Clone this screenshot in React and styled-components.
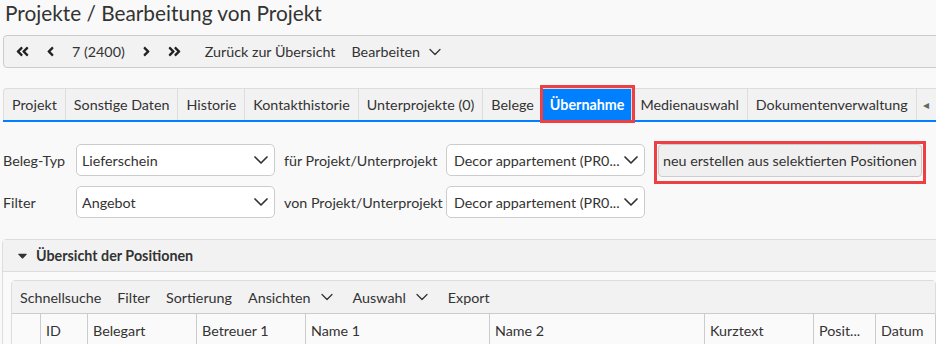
import React from "react";
import styled, { createGlobalStyle } from "styled-components";
import { FaAngleDoubleLeft, FaAngleLeft, FaAngleRight, FaAngleDoubleRight, FaCaretDown } from "react-icons/fa";
import { ChevronDown } from "lucide-react";

const tabs = [
  "Projekt",
  "Sonstige Daten",
  "Historie",
  "Kontakthistorie",
  "Unterprojekte (0)",
  "Belege",
  "Übernahme",
  "Medienauswahl",
  "Dokumentenverwaltung",
];

const columns = [
  { label: "", width: 29 },
  { label: "ID", width: 47 },
  { label: "Belegart", width: 109 },
  { label: "Betreuer 1", width: 109 },
  { label: "Name 1", width: 184 },
  { label: "Name 2", width: 215 },
  { label: "Kurztext", width: 109 },
  { label: "Posit...", width: 62 },
  { label: "Datum", width: 60 },
];

const GlobalStyle = createGlobalStyle`
  html, body {
    margin: 0;
    padding: 0;
    overflow: hidden;
    background: #f9f9f9;
  }
  body {
    font-family: Lato, "Noto Sans", sans-serif;
    font-size: 14.3px;
    color: #333;
  }
`;

function App() {
  return (
    <>
      <GlobalStyle />
      <Page>
        <Title>Projekte / Bearbeitung von Projekt</Title>
        <NavBar>
          <IconButton><FaAngleDoubleLeft size={15} /></IconButton>
          <IconButton><FaAngleLeft size={15} /></IconButton>
          <NavButton>7 (2400)</NavButton>
          <IconButton><FaAngleRight size={15} /></IconButton>
          <IconButton><FaAngleDoubleRight size={15} /></IconButton>
          <NavActions>
            <NavButton>Zurück zur Übersicht</NavButton>
            <NavButton>
              Bearbeiten
              <ChevronDown size={20} strokeWidth={1.5} />
            </NavButton>
          </NavActions>
        </NavBar>

        <TabBar>
          {tabs.map((t) => (
            <Tab key={t} $active={t === "Übernahme"}>
              {t}
            </Tab>
          ))}
          <Tab $stub>
            <StubIcon>◂</StubIcon>
          </Tab>
        </TabBar>

        <Form>
          <FormRow>
            <Label $w={72}>Beleg-Typ</Label>
            <Select>
              <span>Lieferschein</span>
              <ChevronDown size={24} strokeWidth={1.7} />
            </Select>
            <Label $w={161} $pad>für Projekt/Unterprojekt</Label>
            <Select $wide>
              <span>Decor appartement (PR0...</span>
              <ChevronDown size={24} strokeWidth={1.7} />
            </Select>
            <Highlight>
              <Button>neu erstellen aus selektierten Positionen</Button>
            </Highlight>
          </FormRow>
          <FormRow>
            <Label $w={72}>Filter</Label>
            <Select>
              <span>Angebot</span>
              <ChevronDown size={24} strokeWidth={1.7} />
            </Select>
            <Label $w={161} $pad>von Projekt/Unterprojekt</Label>
            <Select $wide>
              <span>Decor appartement (PR0...</span>
              <ChevronDown size={24} strokeWidth={1.7} />
            </Select>
          </FormRow>
        </Form>

        <Panel>
          <PanelHeader>
            <FaCaretDown size={15} />
            Übersicht der Positionen
          </PanelHeader>
          <PanelBody>
            <Grid>
              <GridToolbar>
                <ToolItem>Schnellsuche</ToolItem>
                <ToolItem>Filter</ToolItem>
                <ToolItem>Sortierung</ToolItem>
                <ToolItem>
                  Ansichten <ChevronDown size={20} strokeWidth={1.5} />
                </ToolItem>
                <ToolItem>
                  Auswahl <ChevronDown size={20} strokeWidth={1.5} />
                </ToolItem>
                <ToolItem>Export</ToolItem>
              </GridToolbar>
              <HeaderRow $cols={columns.map((c) => c.width + "px").join(" ")}>
                {columns.map((c, i) => (
                  <HeaderCell key={i}>{c.label}</HeaderCell>
                ))}
              </HeaderRow>
            </Grid>
          </PanelBody>
        </Panel>
      </Page>
    </>
  );
}

export default App;

const Page = styled.div`
  width: 942px;
  padding: 0 0 0 3px;
`;

const Title = styled.h1`
  margin: 0;
  padding: 1px 0 0 2px;
  height: 35px;
  box-sizing: border-box;
  font-size: 20.8px;
  font-weight: 400;
  line-height: 24px;
  color: #333;
`;

const NavBar = styled.div`
  display: flex;
  align-items: center;
  height: 31px;
  padding: 0 4px;
  border: 1px solid #ccc;
  border-radius: 4px;
  background: #f2f2f2;
`;

const IconButton = styled.div`
  display: flex;
  align-items: center;
  justify-content: center;
  width: 28px;
  height: 100%;
  svg {
    color: #222;
  }
`;

const NavActions = styled.div`
  display: flex;
  align-items: center;
  height: 100%;
  margin-left: 8px;
`;

const NavButton = styled.div`
  display: flex;
  align-items: center;
  gap: 5px;
  height: 100%;
  padding: 0 8px;
  color: #333;
  white-space: nowrap;
  svg {
    color: #333;
  }
`;

const TabBar = styled.div`
  display: flex;
  margin-top: 20px;
  border-bottom: 2px solid #0080ff;
  height: 32px;
`;

const Tab = styled.div`
  position: relative;
  display: flex;
  align-items: center;
  padding: 0 8px;
  height: 32px;
  box-sizing: border-box;
  border: 1px solid #ddd;
  border-left: none;
  border-bottom: none;
  background: ${(p) => (p.$active ? "#0080ff" : "#f2f2f2")};
  color: ${(p) => (p.$active ? "#fff" : "#333")};
  font-weight: ${(p) => (p.$active ? 700 : 400)};
  white-space: nowrap;
  &:first-child {
    border-left: 1px solid #ddd;
    border-top-left-radius: 4px;
  }
  ${(p) =>
    p.$active &&
    `
    padding: 0 7px;
    outline: 3px solid #ee3f42;
    z-index: 1;
  `}
  ${(p) => p.$stub && `padding: 0 6px; flex: 1;`}
`;

const StubIcon = styled.span`
  font-size: 12px;
  color: #666;
`;

const Form = styled.div`
  display: flex;
  flex-direction: column;
  gap: 10px;
  padding: 22px 0 21px;
`;

const FormRow = styled.div`
  display: flex;
  align-items: center;
  height: 32px;
`;

const Label = styled.div`
  width: ${(p) => p.$w}px;
  padding-left: ${(p) => (p.$pad ? "9px" : "0")};
  flex: none;
  white-space: nowrap;
`;

const Select = styled.div`
  display: flex;
  align-items: center;
  justify-content: space-between;
  width: 199px;
  height: 32px;
  box-sizing: border-box;
  padding: 0 1px 0 ${(p) => (p.$wide ? "7px" : "5px")};
  margin-left: 1px;
  border: 1px solid #ccc;
  border-radius: 5px;
  background: #fff;
  span {
    white-space: nowrap;
    overflow: hidden;
  }
  svg {
    flex: none;
    color: #333;
    margin-left: ${(p) => (p.$wide ? "-6px" : "0")};
  }
`;

const Highlight = styled.div`
  align-self: flex-start;
  margin: -3px 0 0 9px;
  border: 3px solid #ee3f42;
`;

const Button = styled.div`
  display: flex;
  align-items: center;
  height: 33px;
  box-sizing: border-box;
  padding: 0 4px 0 4px;
  margin: 0 1px 4px 1px;
  border: 1px solid #ccc;
  border-radius: 4px;
  background: #f0f0f0;
  white-space: nowrap;
`;

const Panel = styled.div`
  margin-left: -1px;
  border: 1px solid #ddd;
  border-radius: 4px 4px 0 0;
  background: #fafafa;
`;

const PanelHeader = styled.div`
  display: flex;
  align-items: center;
  gap: 6px;
  height: 31px;
  padding-left: 12px;
  background: #f2f2f2;
  border-bottom: 1px solid #ddd;
  font-weight: 700;
  color: #333;
`;

const PanelBody = styled.div`
  padding: 8px 8px 0 8px;
`;

const Grid = styled.div`
  border: 1px solid #ddd;
  border-radius: 4px 4px 0 0;
  background: #fafafa;
`;

const GridToolbar = styled.div`
  display: flex;
  align-items: center;
  height: 32px;
  background: #f2f2f2;
  border-bottom: 1px solid #ccc;
`;

const ToolItem = styled.div`
  display: flex;
  align-items: center;
  gap: 6px;
  padding: 0 8px;
  white-space: nowrap;
  svg {
    color: #333;
  }
`;

const HeaderRow = styled.div`
  display: grid;
  grid-template-columns: ${(p) => p.$cols};
  height: 32px;
  background: #fafafa;
`;

const HeaderCell = styled.div`
  display: flex;
  align-items: center;
  padding-left: 5px;
  border-right: 1px solid #ccc;
  white-space: nowrap;
  overflow: hidden;
`;
